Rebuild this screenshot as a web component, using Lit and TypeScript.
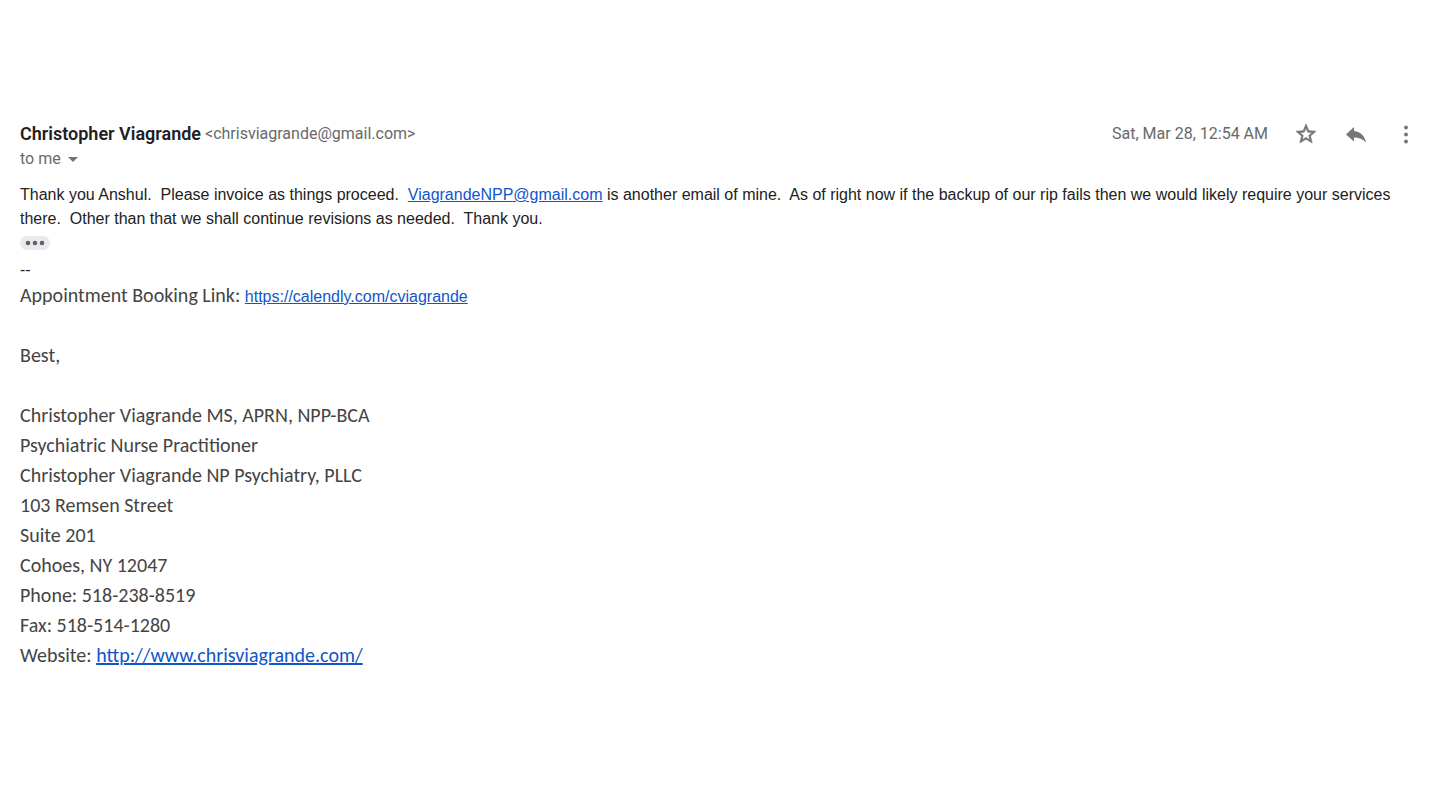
import { LitElement, html, css } from "lit";
import { customElement, property } from "lit/decorators.js";

@customElement("mail-header")
class MailHeader extends LitElement {
  @property() name = "";
  @property() email = "";
  @property() date = "";

  static styles = css`
    :host {
      display: flex;
      justify-content: space-between;
      align-items: flex-start;
      font-family: Roboto, sans-serif;
      font-size: 16px;
      color: #666a6d;
    }
    .from {
      display: flex;
      align-items: center;
      gap: 4px;
      line-height: 28px;
    }
    .name {
      margin: 0;
      font-size: 18px;
      font-weight: 600;
      color: #202124;
    }
    button {
      display: flex;
      align-items: center;
      justify-content: center;
      border: 0;
      padding: 0;
      background: none;
      font: inherit;
      color: inherit;
      cursor: pointer;
    }
    .to {
      gap: 7px;
      line-height: 22px;
    }
    .caret {
      width: 10px;
      height: 5px;
      fill: #757575;
    }
    .meta {
      display: flex;
      align-items: center;
      gap: 26px;
      height: 28px;
      margin-right: -6px;
    }
    .icon {
      width: 24px;
      height: 24px;
      fill: #757575;
    }
    .star {
      stroke: #757575;
      stroke-width: 0.6;
    }
  `;

  render() {
    return html`
      <div>
        <div class="from">
          <h3 class="name">${this.name}</h3>
          <span>&lt;${this.email}&gt;</span>
        </div>
        <button class="to" aria-label="to me, show details">
          to me
          <svg class="caret" viewBox="0 0 10 5"><path d="M0 0h10L5 5z" /></svg>
        </button>
      </div>
      <div class="meta">
        <time>${this.date}</time>
        <button aria-label="Star">
          <svg class="icon star" viewBox="0 0 24 24">
            <path d="M22 9.24l-7.19-.62L12 2 9.19 8.63 2 9.24l5.46 4.73L5.82 21 12 17.27 18.18 21l-1.63-7.03L22 9.24zM12 15.4l-3.76 2.27 1-4.28-3.32-2.88 4.38-.38L12 6.1l1.71 4.04 4.38.38-3.32 2.88 1 4.28L12 15.4z" />
          </svg>
        </button>
        <button aria-label="Reply">
          <svg class="icon" viewBox="0 0 24 24">
            <path d="M10 9V5l-8 7.5 8 7V15.4c5 0 9 1.4 12 5.1-1-5-4-10.5-12-11.5z" />
          </svg>
        </button>
        <button aria-label="More">
          <svg class="icon" viewBox="0 0 24 24">
            <circle cx="12" cy="5.5" r="1.9" /><circle cx="12" cy="12.5" r="1.9" /><circle cx="12" cy="19.5" r="1.9" />
          </svg>
        </button>
      </div>
    `;
  }
}

@customElement("app-root")
class AppRoot extends LitElement {
  static styles = css`
    :host {
      display: block;
      padding: 120px 20px;
      background: #fff;
      font-family: "Liberation Sans", Arial, sans-serif;
      font-size: 16px;
      line-height: 24px;
      color: #222;
    }
    p {
      margin: 0;
    }
    a {
      color: #1155cc;
    }
    .message {
      margin-top: 13px;
    }
    .trimmed {
      display: flex;
      align-items: center;
      justify-content: center;
      width: 30px;
      height: 14px;
      margin: 5px 0 10px;
      border: 0;
      border-radius: 7px;
      padding: 0;
      background: #e8eaed;
      cursor: pointer;
    }
    .dots {
      width: 20px;
      height: 6px;
      fill: #5f6368;
    }
    .divider {
      line-height: 20px;
    }
    .signature {
      font-family: Carlito, Calibri, Lato, sans-serif;
      font-size: 20px;
      line-height: 30px;
      color: #444;
      font-style: normal;
    }
    .block {
      margin-bottom: 30px;
    }
    .booking {
      font-family: "Liberation Sans", Arial, sans-serif;
      font-size: 16px;
      line-height: 20px;
    }
  `;

  private lines = [
    "Christopher Viagrande MS, APRN, NPP-BCA",
    "Psychiatric Nurse Practitioner",
    "Christopher Viagrande NP Psychiatry, PLLC",
    "103 Remsen Street",
    "Suite 201",
    "Cohoes, NY 12047",
    "Phone: 518-238-8519",
    "Fax: 518-514-1280",
  ];

  render() {
    return html`
      <mail-header
        name="Christopher Viagrande"
        email="chrisviagrande@gmail.com"
        date="Sat, Mar 28, 12:54 AM"
      ></mail-header>
      <p class="message">
        Thank you Anshul.&nbsp; Please invoice as things proceed.&nbsp;
        <a href="mailto:ViagrandeNPP@gmail.com">ViagrandeNPP@gmail.com</a> is another email of mine.&nbsp; As of
        right now if the backup of our rip fails then we would likely require your services there.&nbsp; Other than
        that we shall continue revisions as needed.&nbsp; Thank you.
      </p>
      <button class="trimmed" aria-label="Show trimmed content">
        <svg class="dots" viewBox="0 0 20 6">
          <circle cx="3" cy="3" r="2.3" /><circle cx="10" cy="3" r="2.3" /><circle cx="17" cy="3" r="2.3" />
        </svg>
      </button>
      <p class="divider">--</p>
      <address class="signature">
        <p class="block">
          Appointment Booking Link:
          <a class="booking" href="https://calendly.com/cviagrande">https://calendly.com/cviagrande</a>
        </p>
        <p class="block">Best,</p>
        ${this.lines.map((line) => html`<p>${line}</p>`)}
        <p>Website: <a href="http://www.chrisviagrande.com/">http://www.chrisviagrande.com/</a></p>
      </address>
    `;
  }
}
